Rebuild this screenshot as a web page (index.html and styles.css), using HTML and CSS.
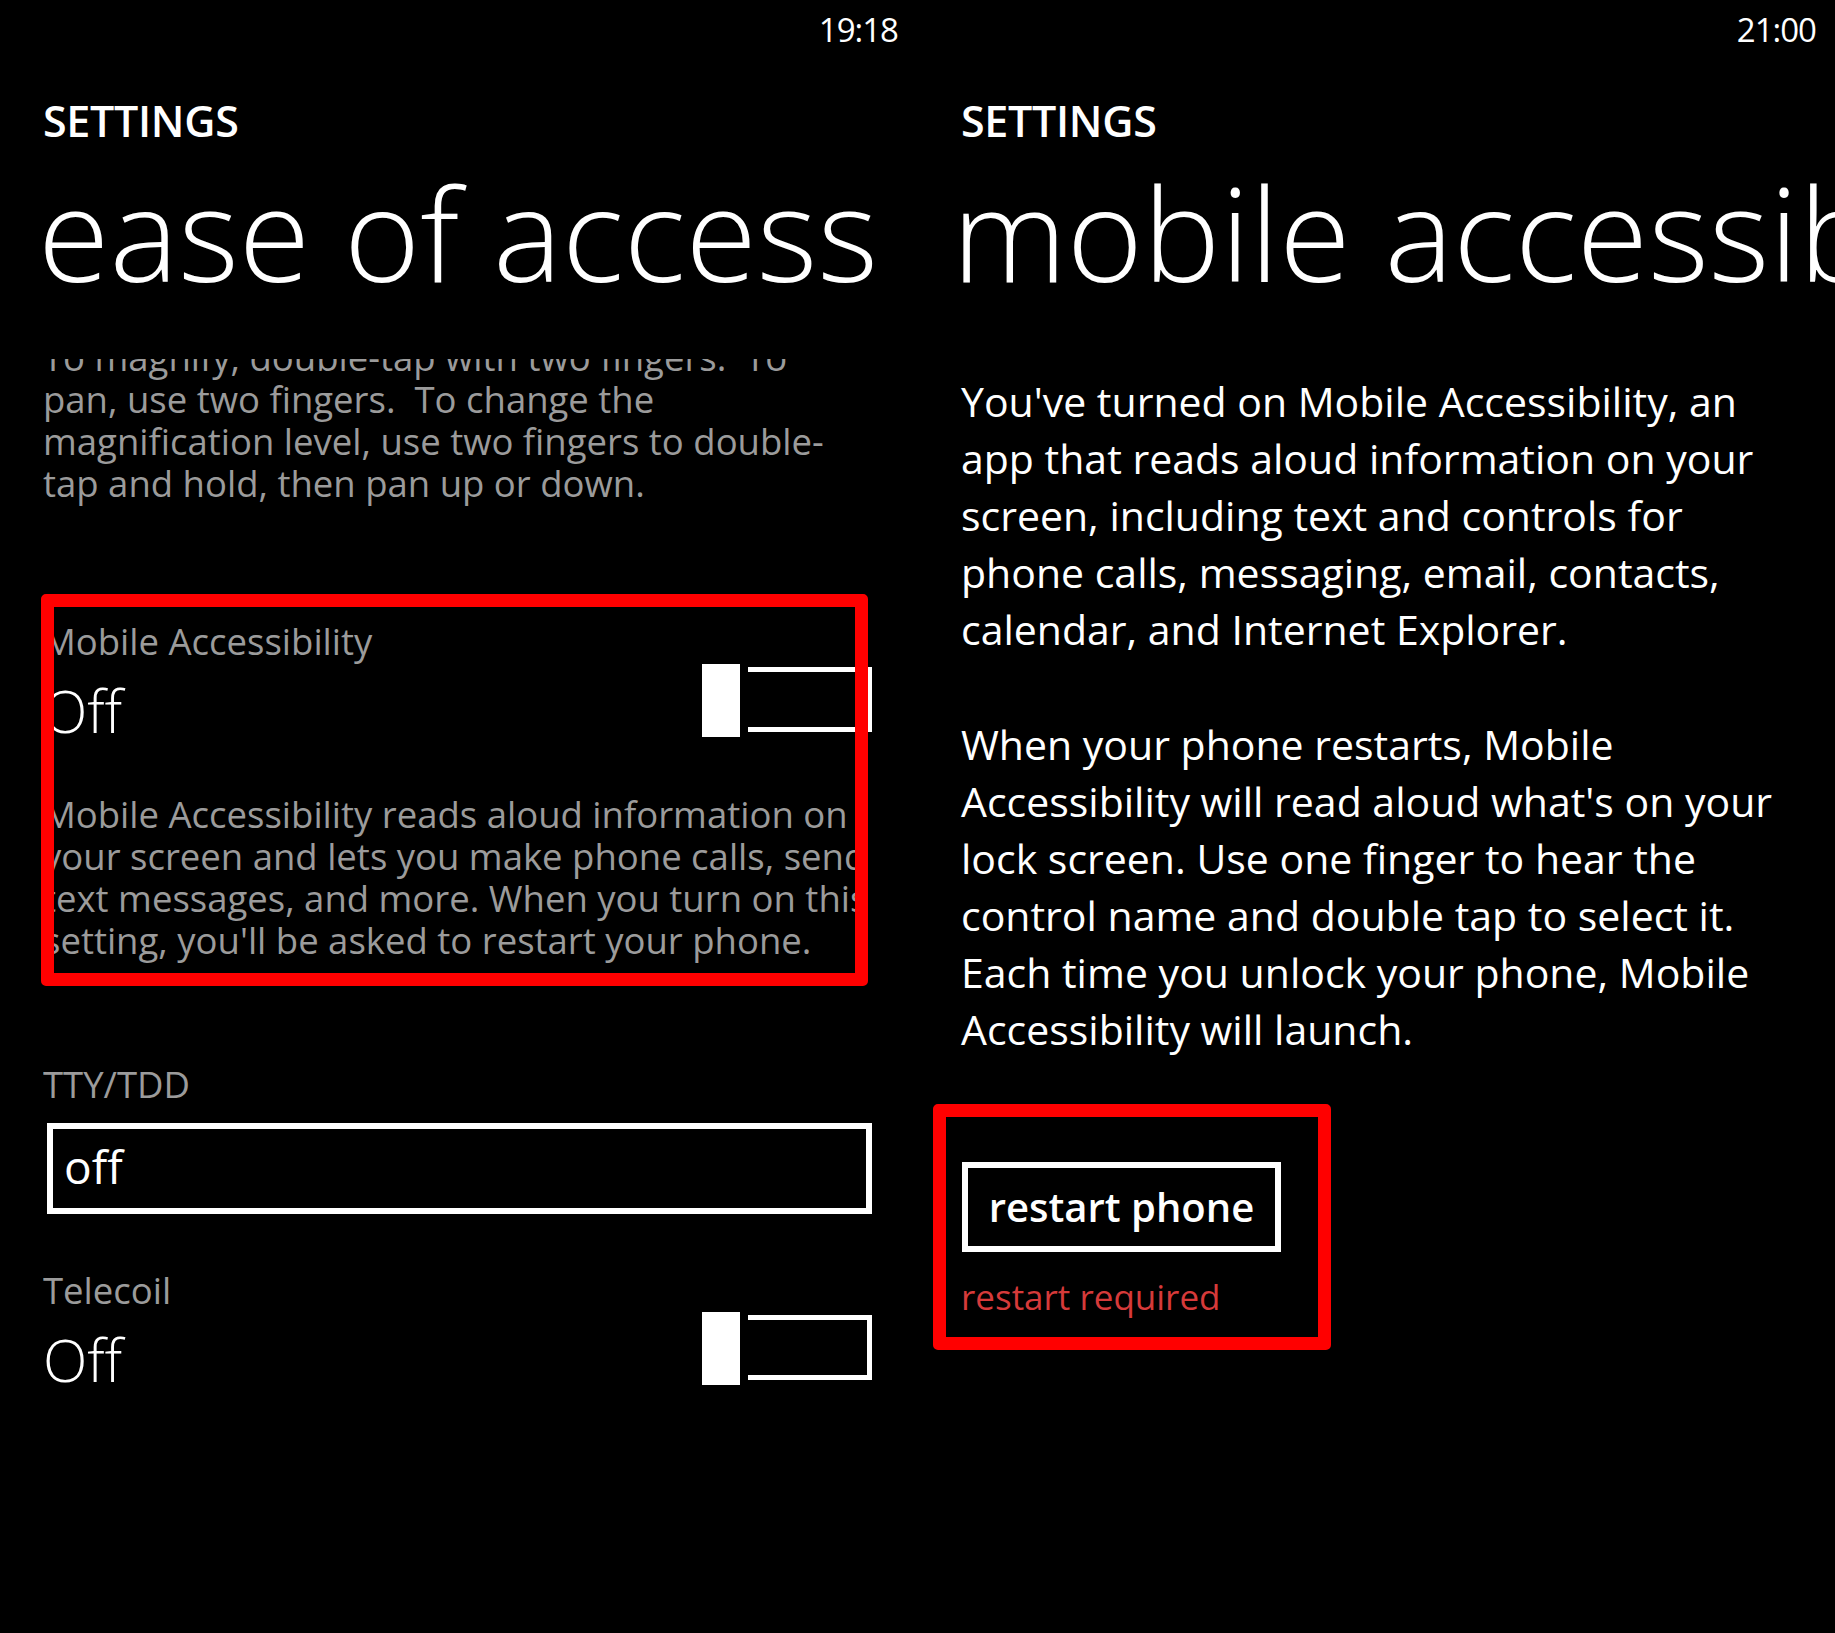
FILE: index.html
```html
<!DOCTYPE html>
<html lang="en">
<head>
<meta charset="utf-8">
<title>Settings - ease of access</title>
<link rel="stylesheet" href="styles.css">
</head>
<body>
<div class="screen">
  <section class="panel panel-left">
    <div class="status"><span class="time">19:18</span></div>
    <div class="app-title">SETTINGS</div>
    <h1 class="page-title">ease of access</h1>
    <div class="scroller">
      <p class="help">
        <span class="line">To magnify, double-tap with two fingers.&nbsp; To</span>
        <span class="line">pan, use two fingers.&nbsp; To change the</span>
        <span class="line">magnification level, use two fingers to double-</span>
        <span class="line">tap and hold, then pan up or down.</span>
      </p>
      <div class="setting setting-mobile">
        <div class="label">Mobile Accessibility</div>
        <div class="row">
          <span class="value">Off</span>
          <span class="toggle"><span class="thumb"></span><span class="track"></span></span>
        </div>
        <p class="desc">
          <span class="line">Mobile Accessibility reads aloud information on</span>
          <span class="line">your screen and lets you make phone calls, send</span>
          <span class="line">text messages, and more. When you turn on this</span>
          <span class="line">setting, you'll be asked to restart your phone.</span>
        </p>
      </div>
      <div class="setting setting-tty">
        <div class="label">TTY/TDD</div>
        <div class="picker">off</div>
      </div>
      <div class="setting setting-telecoil">
        <div class="label">Telecoil</div>
        <div class="row">
          <span class="value">Off</span>
          <span class="toggle toggle-low"><span class="thumb"></span><span class="track"></span></span>
        </div>
      </div>
    </div>
    <div class="annot annot-left"></div>
  </section>

  <section class="panel panel-right">
    <div class="status"><span class="time">21:00</span></div>
    <div class="app-title">SETTINGS</div>
    <h1 class="page-title page-title-right">mobile accessibility</h1>
    <div class="info">
      <p class="info-text">
        <span class="line">You've turned on Mobile Accessibility, an</span>
        <span class="line">app that reads aloud information on your</span>
        <span class="line">screen, including text and controls for</span>
        <span class="line">phone calls, messaging, email, contacts,</span>
        <span class="line">calendar, and Internet Explorer.</span>
      </p>
      <p class="info-text info-text-second">
        <span class="line">When your phone restarts, Mobile</span>
        <span class="line">Accessibility will read aloud what's on your</span>
        <span class="line">lock screen. Use one finger to hear the</span>
        <span class="line">control name and double tap to select it.</span>
        <span class="line">Each time you unlock your phone, Mobile</span>
        <span class="line">Accessibility will launch.</span>
      </p>
      <div class="button">restart phone</div>
      <div class="warning">restart required</div>
    </div>
    <div class="annot annot-right"></div>
  </section>
</div>
</body>
</html>
```

FILE: styles.css
```css
* {
  box-sizing: border-box;
  margin: 0;
  padding: 0;
}

html, body {
  background: #000;
}

body {
  width: 1835px;
  height: 1633px;
  overflow: hidden;
  font-family: "Open Sans", "Noto Sans", "DejaVu Sans", sans-serif;
  color: #fff;
}

.screen {
  display: flex;
  height: 1633px;
}

.panel {
  position: relative;
  display: flex;
  flex-direction: column;
  height: 1633px;
  overflow: hidden;
}

.panel-left {
  width: 917px;
  padding: 0 45px 0 43px;
}

.panel-right {
  width: 918px;
  padding: 0 45px 0 44px;
}

.status {
  height: 60px;
  display: flex;
  justify-content: flex-end;
  margin-right: -26px;
}

.time {
  font-size: 33px;
  line-height: 60px;
  letter-spacing: -1px;
}

.app-title {
  margin-top: 36px;
  font-size: 43px;
  line-height: 50px;
  font-weight: 600;
  letter-spacing: -0.3px;
}

.page-title {
  margin-top: 16px;
  margin-left: -5px;
  font-size: 130px;
  line-height: 140px;
  font-weight: 300;
  white-space: nowrap;
}

.page-title-right {
  margin-left: -9px;
}

.line {
  display: block;
  white-space: nowrap;
}

/* left panel */
.scroller {
  margin-top: 57px;
  flex: 1;
  overflow: hidden;
}

.help,
.desc,
.label {
  font-size: 36.5px;
  line-height: 42px;
  color: #9b9b9b;
}

.help {
  margin-top: -23.5px;
}

.setting-mobile { margin-top: 116px; }
.setting-tty { margin-top: 102px; }
.setting-telecoil { margin-top: 55px; }

.row {
  display: flex;
  justify-content: space-between;
  align-items: flex-start;
  margin-top: 13px;
}

.value {
  font-size: 58px;
  line-height: 72px;
  font-weight: 300;
}

.toggle {
  display: flex;
  margin-top: -10.5px;
}

.toggle-low {
  margin-top: -11.5px;
}

.thumb {
  width: 38px;
  height: 73px;
  background: #fff;
}

.track {
  width: 124px;
  height: 65px;
  margin: 3px 0 0 8px;
  border: 5px solid #fff;
  border-left: 0;
}

.desc {
  margin-top: 46px;
}

.picker {
  margin: 18px 0 0 4px;
  height: 91px;
  border: 6px solid #fff;
  padding: 0 0 4px 11px;
  font-size: 46px;
  line-height: 75px;
}

/* right panel */
.info {
  margin-top: 71px;
}

.info-text {
  font-size: 41px;
  line-height: 57px;
}

.info-text-second {
  margin-top: 58px;
}

.button {
  display: inline-block;
  margin: 104px 0 0 1px;
  width: 319px;
  height: 90px;
  border: 6px solid #fff;
  text-align: center;
  font-size: 40px;
  line-height: 78px;
  font-weight: 600;
}

.warning {
  margin-top: 24px;
  font-size: 35px;
  line-height: 42px;
  color: #d63a3a;
}

/* red annotation boxes laid over the screenshots */
.annot {
  position: absolute;
  border: 13px solid #ff0000;
  border-radius: 5px;
  pointer-events: none;
}

.annot-left {
  left: 41px;
  top: 594px;
  width: 827px;
  height: 392px;
}

.annot-right {
  left: 16px;
  top: 1104px;
  width: 398px;
  height: 246px;
}
```
